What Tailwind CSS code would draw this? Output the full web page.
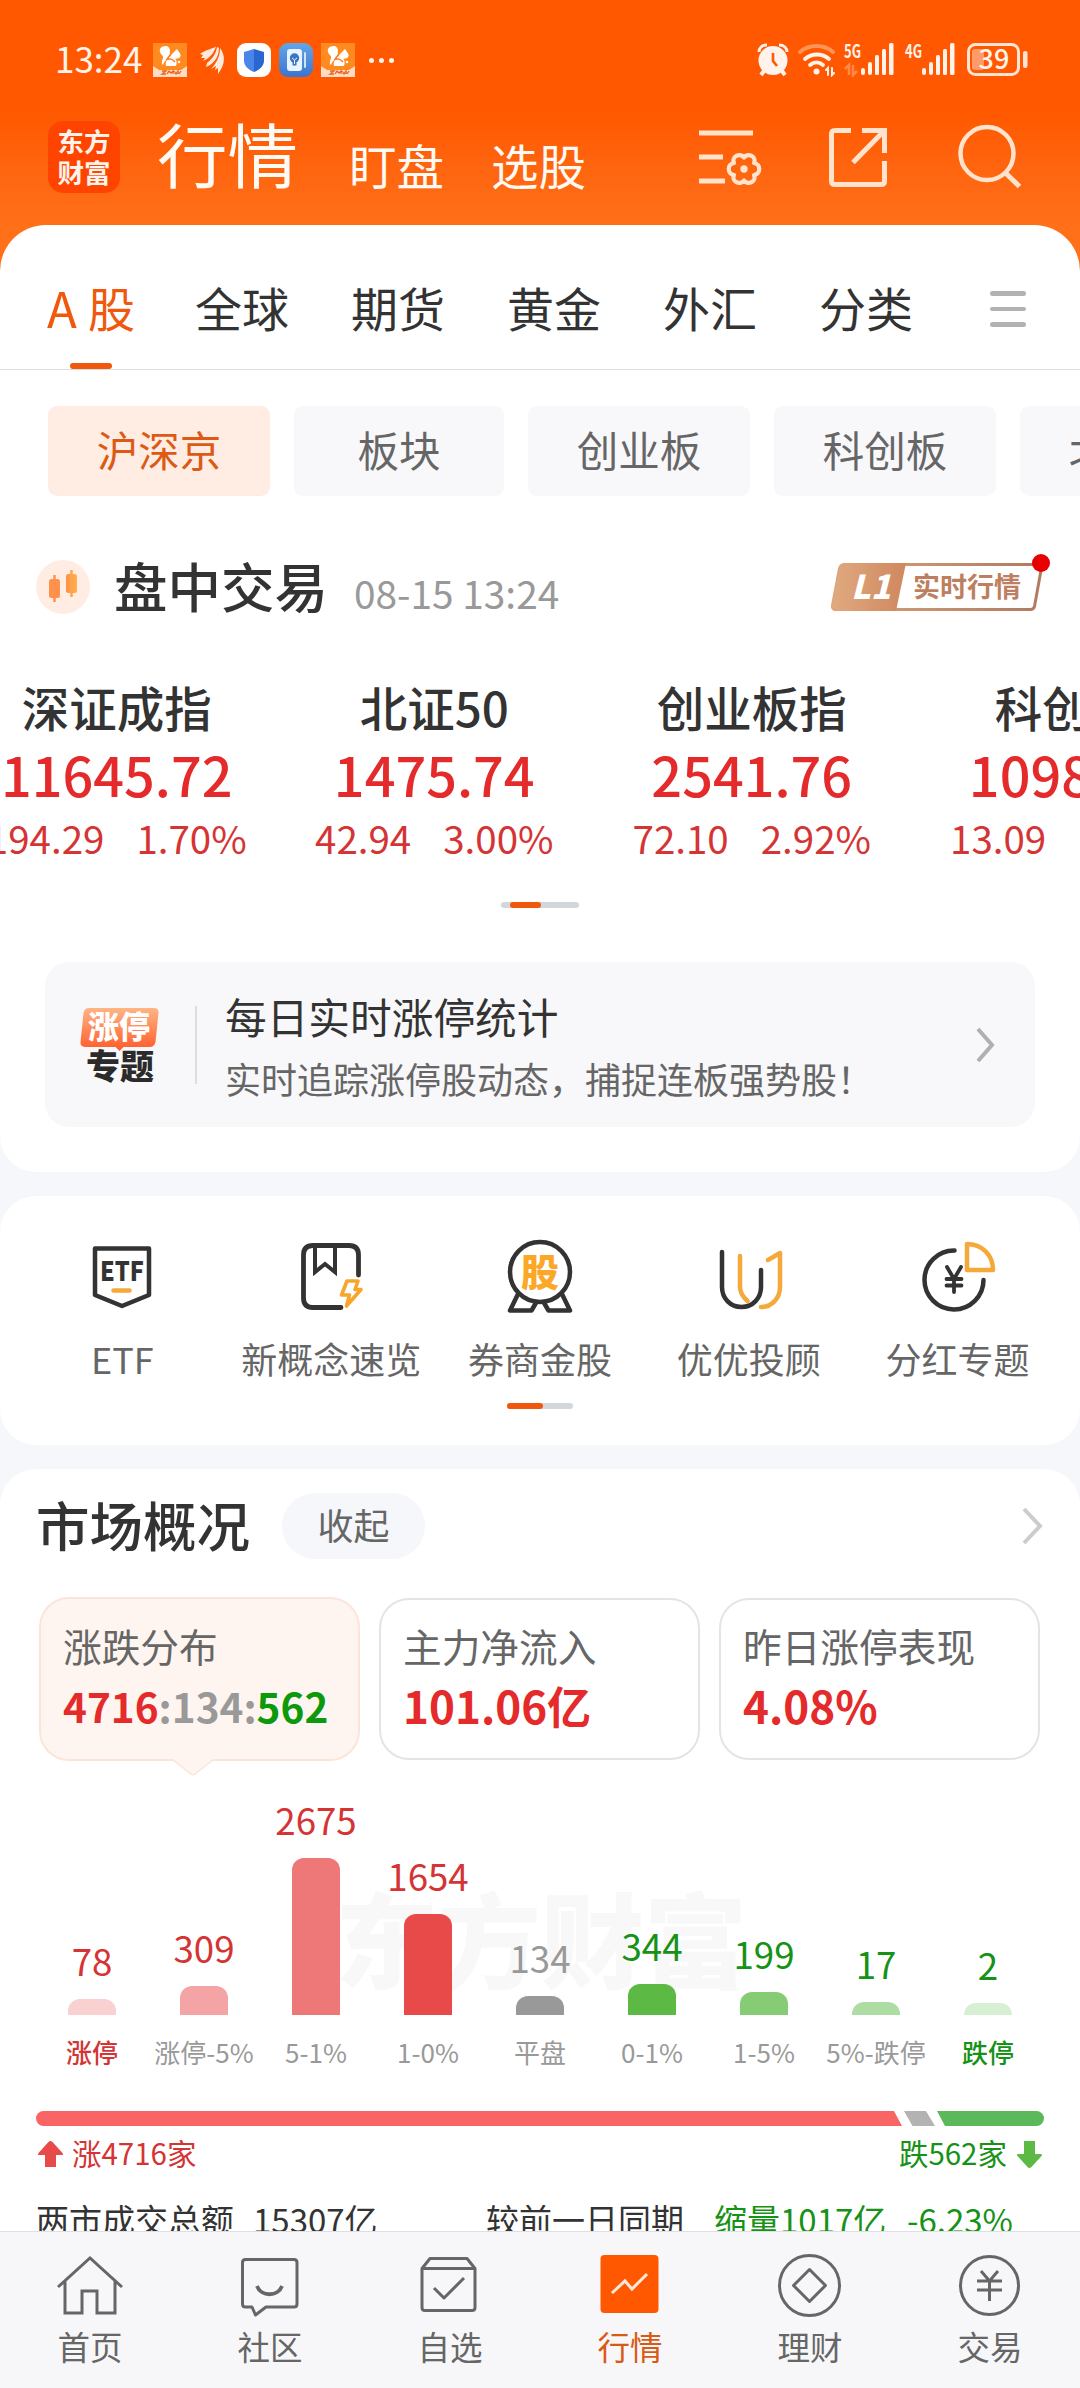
<!DOCTYPE html>
<html lang="zh-CN">
<head>
  <meta charset="UTF-8" />
  <meta name="viewport" content="width=device-width, initial-scale=1.0"/>
  <title>行情</title>
  <script src="https://cdn.jsdelivr.net/npm/@tailwindcss/browser@4"></script>
</head>
<body class="relative w-[1080px] h-[2388px] overflow-hidden bg-[#f6f7fa] text-[#333] font-['Noto_Sans_CJK_SC',sans-serif]">

  <!-- Header -->
  <header class="h-[290px] -mb-[65px] bg-linear-to-b from-[#ff5800] from-[38%] to-[#ff7019] to-[78%]">

    <!-- Status bar -->
    <div class="h-[121px] pt-[43px] pl-[55px] pr-[52px] flex items-start justify-between text-[#fff3ea]">
      <div class="flex items-center h-[34px]">
        <span class="w-[98px] text-[35px] leading-[34px] pb-1">13:24</span>
        <svg class="w-[34px] h-[34px]" viewBox="0 0 34 34">
          <rect width="34" height="34" fill="#ff8a1f"/>
          <path d="M0 23q3 2 6 4h22q3-2 6-4v11H0z" fill="#ffdcc6"/>
          <path d="M13 3c-5 0-7 3-6 6 1 3 4 4 3 6-1 3-2 5 0 7 1-4 4-5 6-8 2-4 0-4 1-6 0-3-2-5-4-5z" fill="#fff"/>
          <path d="M24 6l2 3c2 2 2 5 0 6l-4 1c2 1 2 4 1 7H13c-1-4 1-7 4-10 2-2 4-4 7-7z" fill="#fff"/>
          <path d="M13 17c3-2 7-1 9 2M18 11l-4 5" fill="none" stroke="#ff7a1a" stroke-width="1.500"/>
          <circle cx="26" cy="19" r="1.200" fill="#fff"/>
          <path d="M9 28h4l-4 3h4M14 31l2-3 2 2 2-2v3M21 28l2 3 2-3v3M26 31l2-3" fill="none" stroke="#e8641c" stroke-width="1.300"/>
        </svg>
        <svg class="w-[24px] h-[30px] ml-[13px]" viewBox="0 0 24 30" fill="#ffe9dc">
          <path d="M0 9C5 5 10 5 16 1.500 14 8 10 13 3 16l2-3-4 0 2-3z"/>
          <path d="M17 2l2 1C19 12 14 19 6 22l1-4C12 14 16 9 17 2z"/>
          <path d="M20 3c6 8 5 17-2 26l0-6-3 2 1-4-5 3C17 17 20 11 20 3z"/>
        </svg>
        <svg class="w-[34px] h-[34px] ml-[13px]" viewBox="0 0 34 34">
          <rect width="34" height="34" rx="9" fill="#fff"/>
          <path d="M17 6l10 3v9c0 5-5 9-10 11z" fill="#2a66cf"/>
          <path d="M17 6L7 9v9c0 5 5 9 10 11z" fill="#4a86ea"/>
        </svg>
        <svg class="w-[34px] h-[34px] ml-[8px]" viewBox="0 0 34 34">
          <defs><linearGradient id="bk" x1="0" y1="0" x2="0" y2="1"><stop offset="0" stop-color="#63a6ea"/><stop offset="1" stop-color="#3b74cf"/></linearGradient></defs>
          <rect width="34" height="34" rx="9" fill="url(#bk)"/>
          <rect x="8" y="6" width="15" height="22" rx="3" fill="#eaf4ff"/>
          <rect x="25" y="9" width="2" height="16" rx="1" fill="#cfe3fb"/>
          <circle cx="15.500" cy="15" r="4.700" fill="#3a74c8"/>
          <path d="M13.500 19h4v3.500h-4z" fill="#3a74c8"/>
          <path d="M13 15l2.500 2 2.500-2M15.500 17v4" stroke="#eaf4ff" fill="none"/>
        </svg>
        <svg class="w-[34px] h-[34px] ml-[8px]" viewBox="0 0 34 34">
          <rect width="34" height="34" fill="#ff8a1f"/>
          <path d="M0 23q3 2 6 4h22q3-2 6-4v11H0z" fill="#ffdcc6"/>
          <path d="M13 3c-5 0-7 3-6 6 1 3 4 4 3 6-1 3-2 5 0 7 1-4 4-5 6-8 2-4 0-4 1-6 0-3-2-5-4-5z" fill="#fff"/>
          <path d="M24 6l2 3c2 2 2 5 0 6l-4 1c2 1 2 4 1 7H13c-1-4 1-7 4-10 2-2 4-4 7-7z" fill="#fff"/>
          <path d="M13 17c3-2 7-1 9 2M18 11l-4 5" fill="none" stroke="#ff7a1a" stroke-width="1.500"/>
          <circle cx="26" cy="19" r="1.200" fill="#fff"/>
          <path d="M9 28h4l-4 3h4M14 31l2-3 2 2 2-2v3M21 28l2 3 2-3v3M26 31l2-3" fill="none" stroke="#e8641c" stroke-width="1.300"/>
        </svg>
        <div class="flex gap-[5px] ml-[14px]">
          <i class="size-[5px] rounded-full bg-[#fff3ea]"></i>
          <i class="size-[5px] rounded-full bg-[#fff3ea]"></i>
          <i class="size-[5px] rounded-full bg-[#fff3ea]"></i>
        </div>
      </div>

      <div class="flex items-start h-[34px]">
        <svg class="w-[32px] h-[34px]" viewBox="0 0 32 34">
          <circle cx="16" cy="17.500" r="14.500" fill="#fff3ec"/>
          <path d="M2 9c0-4 3-7 8-7M30 9c0-4-3-7-8-7" stroke="#fff3ec" stroke-width="3" fill="none"/>
          <path d="M7 28l-3 4M25 28l3 4" stroke="#fff3ec" stroke-width="4"/>
          <path d="M16 10v8l4 5" stroke="#ff5800" stroke-width="2.600" fill="none"/>
        </svg>
        <svg class="w-[38px] h-[34px] ml-[9px]" viewBox="0 0 38 34" fill="none" stroke-width="3.800" stroke-linecap="round">
          <path d="M2 9C11 1 26 1 35 9" stroke="#ff9457"/>
          <path d="M7 16c7-6 17-6 24 0M12 22c4-3.500 9-3.500 13 0" stroke="#fff3ec"/>
          <circle cx="18.500" cy="28.500" r="3" fill="#fff3ec" stroke="none"/>
          <path d="M28 27l2-2v7M34 25v7l2-2" stroke="#fff3ec" stroke-width="2"/>
        </svg>
        <svg class="w-[50px] h-[34px] ml-[8px] overflow-visible" viewBox="0 0 50 34" fill="#fff3ec">
          <text x="0" y="14.500" font-size="18" font-weight="700" textLength="17" lengthAdjust="spacingAndGlyphs" font-family="Noto Sans CJK SC">5G</text>
          <path d="M1 26l4-4v10M9 22v10l4-4" stroke="#ff8a48" stroke-width="2.500" fill="none"/>
          <rect x="17" y="25" width="4" height="7" rx="2"/><rect x="24" y="19" width="4" height="13" rx="2"/><rect x="31" y="12" width="4" height="20" rx="1.500"/><rect x="38" y="6" width="4" height="26" rx="1.500"/><rect x="45" y="0" width="4.500" height="32" rx="1.500"/>
        </svg>
        <svg class="w-[50px] h-[34px] ml-[11px] overflow-visible" viewBox="0 0 50 34" fill="#fff3ec">
          <text x="0" y="14.500" font-size="18" font-weight="700" textLength="17" lengthAdjust="spacingAndGlyphs" font-family="Noto Sans CJK SC">4G</text>
          <rect x="17" y="25" width="4" height="7" rx="2"/><rect x="24" y="19" width="4" height="13" rx="2"/><rect x="31" y="12" width="4" height="20" rx="1.500"/><rect x="38" y="6" width="4" height="26" rx="1.500"/><rect x="45" y="0" width="4.500" height="32" rx="1.500"/>
        </svg>
        <svg class="w-[61px] h-[34px] ml-[12px] overflow-visible" viewBox="0 0 61 34">
          <rect x="1.500" y="1.500" width="50" height="30" rx="7" fill="none" stroke="#ffe4d3" stroke-width="3"/>
          <rect x="5" y="6" width="12" height="21" rx="3" fill="#ff9a6a"/>
          <rect x="56" y="8" width="4.500" height="17" rx="2" fill="#ffe4d3"/>
          <text x="27" y="26" font-size="27" font-weight="500" text-anchor="middle" fill="#fff3ec" font-family="Noto Sans CJK SC">39</text>
        </svg>
      </div>
    </div>

    <!-- Main nav -->
    <div class="flex h-[72px] pl-[48px] text-[#fffaf3]">
      <div class="w-[72px] h-[72px] rounded-[15px] bg-[#ff4400] font-bold text-[26.500px] leading-[31px] text-center pt-[4px] text-[#fff3ec]">东方<br>财富</div>
      <div class="w-[192px] pl-[37px] text-[70.500px] leading-[72px] -mt-[5px] whitespace-nowrap">行情</div>
      <div class="w-[142px] pl-[37px] text-[47.500px] leading-[72px] mt-[8px] whitespace-nowrap">盯盘</div>
      <div class="w-[245px] pl-[37px] text-[47.500px] leading-[72px] mt-[8px] whitespace-nowrap">选股</div>
      <svg class="w-[64px] h-[72px] shrink-0" viewBox="699 121 64 72" fill="none" stroke="#ffe3cc" stroke-width="5">
        <path d="M699 133h54M699 157h24M699 181h26"/>
        <path stroke-width="4.200" stroke-linejoin="round" d="M744 157.500C748 152 757 157 754 163C761 164 761 174 754 175C757 181 748 186 744 180.500C740 186 731 181 734 175C727 174 727 164 734 163C731 157 740 152 744 157.500z"/>
        <circle cx="744" cy="169" r="3.700" fill="#ffe3cc" stroke="none"/>
      </svg>
      <svg class="w-[60px] h-[72px] ml-[65px] shrink-0" viewBox="828 121 60 72" fill="none" stroke="#ffe3cc" stroke-width="5">
        <path d="M851 130.500H835q-3.500 0-3.500 3.500v47q0 3.500 3.500 3.500h46q3.500 0 3.500-3.500v-20M862 130.500h22.500V153M884 131l-31 31.500"/>
      </svg>
      <svg class="w-[66px] h-[72px] ml-[69px] shrink-0" viewBox="957 121 66 72" fill="none" stroke="#ffe3cc" stroke-width="4.500">
        <circle cx="987" cy="153.500" r="26.500"/>
        <path d="M1005.500 173l14 13.500" stroke-width="5"/>
      </svg>
    </div>
  </header>

  <!-- A-share quotes -->
  <section class="bg-white rounded-t-[46px] rounded-b-[36px] pb-[45px] overflow-hidden">

    <!-- Tabs -->
    <div class="relative h-[145px] pt-[19px] pl-[47px] flex items-center border-b border-[#dedede] text-[47px] leading-[60px] whitespace-nowrap">
      <div class="w-[148px] text-[#f0590d] flex"><span class="w-[41px] text-[49px]">A</span>股</div>
      <div class="w-[156px]">全球</div>
      <div class="w-[156px]">期货</div>
      <div class="w-[156px]">黄金</div>
      <div class="w-[156px]">外汇</div>
      <div class="w-[171px]">分类</div>
      <div class="flex flex-col gap-[11px] mt-[5px]">
        <i class="w-[36px] h-[4.500px] rounded-full bg-[#b2b2b2]"></i>
        <i class="w-[36px] h-[4.500px] rounded-full bg-[#b2b2b2]"></i>
        <i class="w-[36px] h-[4.500px] rounded-full bg-[#b2b2b2]"></i>
      </div>
      <i class="absolute left-[70px] bottom-0 w-[42px] h-[6px] rounded-full bg-[#f0590d]"></i>
    </div>

    <!-- Chips -->
    <div class="mt-[36px] ml-[48px] flex gap-[24px] text-[41.500px] leading-[86px] text-center text-[#666] whitespace-nowrap">
      <div class="w-[222px] h-[90px] shrink-0 rounded-[9px] bg-[#ffede4] text-[#dc5a14]">沪深京</div>
      <div class="w-[210px] h-[90px] shrink-0 rounded-[9px] bg-[#f8f8fa]">板块</div>
      <div class="w-[222px] h-[90px] shrink-0 rounded-[9px] bg-[#f8f8fa]">创业板</div>
      <div class="w-[222px] h-[90px] shrink-0 rounded-[9px] bg-[#f8f8fa]">科创板</div>
      <div class="w-[222px] h-[90px] shrink-0 rounded-[9px] bg-[#f8f8fa]">北交所</div>
    </div>

    <!-- Session title -->
    <div class="mt-[64px] pl-[36px] pr-[28px] h-[54px] flex items-center">
      <svg class="w-[54px] h-[54px]" viewBox="0 0 54 54">
        <defs><linearGradient id="cd" x1="0" y1="0" x2="1" y2="0"><stop offset="0" stop-color="#ff9147"/><stop offset="1" stop-color="#ffb04d"/></linearGradient></defs>
        <circle cx="27" cy="27" r="27" fill="#ffede4"/>
        <rect x="13" y="19" width="11" height="19" rx="2.500" fill="#ff914d"/><path d="M18.500 15v27" stroke="#ff914d" stroke-width="2.500"/>
        <rect x="30" y="14" width="11" height="19" rx="2.500" fill="url(#cd)"/><path d="M35.500 10v27" stroke="#ffa34d" stroke-width="2.500"/>
      </svg>
      <h2 class="ml-[24px] text-[53.500px] leading-[54px] font-medium pb-[5px]">盘中交易</h2>
      <span class="ml-[26px] text-[38.800px] leading-[54px] text-[#999] pt-[10px]">08-15 13:24</span>
      <svg class="w-[222px] h-[62px] ml-auto -mt-[8px] overflow-visible" viewBox="830 552 222 62">
        <defs>
          <linearGradient id="l1" x1="0" y1="0" x2="1" y2="0"><stop offset="0" stop-color="#e0aa80"/><stop offset="1" stop-color="#d0875e"/></linearGradient>
          <linearGradient id="l2" x1="0" y1="0" x2="1" y2="0"><stop offset="0" stop-color="#dba37a"/><stop offset="1" stop-color="#b07a63"/></linearGradient>
        </defs>
        <path d="M845 564.500h194q3 0 2.500 3l-7 39q-1 3-4 3H836q-4 0-3.500-4l7-37q1-4 5.500-4z" fill="#fff" stroke="url(#l2)" stroke-width="3"/>
        <path d="M845 563h61l-10 48h-60q-5 0-4-5l7-37q1-6 6-6z" fill="url(#l1)"/>
        <text x="851" y="599" font-size="33" font-weight="900" font-style="italic" fill="#fff" font-family="Noto Sans CJK SC">L1</text>
        <text x="913" y="597" font-size="27" font-weight="700" fill="#bd7f5f" font-family="Noto Sans CJK SC">实时行情</text>
        <circle cx="1041" cy="563" r="9" fill="#e60000"/>
      </svg>
    </div>

    <!-- Indices -->
    <div class="mt-[67px] -ml-[42px] flex text-center whitespace-nowrap">
      <div class="w-[317.500px] shrink-0">
        <div class="text-[47.500px] leading-[52px] font-medium">深证成指</div>
        <div class="mt-[11px] text-[54px] leading-[60px] font-medium text-[#e42a2a]">11645.72</div>
        <div class="mt-[10px] text-[38.500px] leading-[46px] text-[#d53434] flex justify-center gap-[32px]"><span>194.29</span><span>1.70%</span></div>
      </div>
      <div class="w-[317.500px] shrink-0">
        <div class="text-[47.500px] leading-[52px] font-medium">北证50</div>
        <div class="mt-[11px] text-[54px] leading-[60px] font-medium text-[#e42a2a]">1475.74</div>
        <div class="mt-[10px] text-[38.500px] leading-[46px] text-[#d53434] flex justify-center gap-[32px]"><span>42.94</span><span>3.00%</span></div>
      </div>
      <div class="w-[317.500px] shrink-0">
        <div class="text-[47.500px] leading-[52px] font-medium">创业板指</div>
        <div class="mt-[11px] text-[54px] leading-[60px] font-medium text-[#e42a2a]">2541.76</div>
        <div class="mt-[10px] text-[38.500px] leading-[46px] text-[#d53434] flex justify-center gap-[32px]"><span>72.10</span><span>2.92%</span></div>
      </div>
      <div class="w-[317.500px] shrink-0">
        <div class="text-[47.500px] leading-[52px] font-medium">科创50</div>
        <div class="mt-[11px] text-[54px] leading-[60px] font-medium text-[#e42a2a]">1098.50</div>
        <div class="mt-[10px] text-[38.500px] leading-[46px] text-[#d53434] flex justify-center gap-[32px]"><span>13.09</span><span>1.21%</span></div>
      </div>
    </div>
    <div class="mt-[42px] mx-auto w-[78px] h-[6px] pl-[9px] rounded-full bg-[#d3d7db]">
      <div class="w-[31px] h-[6px] rounded-full bg-[#f0590d]"></div>
    </div>

    <!-- Banner -->
    <div class="mt-[54px] mx-[45px] h-[165px] rounded-[24px] bg-[#f8f8fa] flex items-center">
      <svg class="w-[82px] h-[78px] ml-[34px] overflow-visible" viewBox="79 1006 82 78">
        <defs><linearGradient id="zt" x1="0" y1="0" x2="0" y2="1"><stop offset="0" stop-color="#ffb584"/><stop offset="1" stop-color="#ff5a2a"/></linearGradient></defs>
        <path d="M89 1008h65q5 0 4.500 5l-3 29q-1 5-6 5h-26l-4 4-4-4H85q-5 0-4.500-5l3-29q1-5 5.500-5z" fill="url(#zt)"/>
        <g font-family="Noto Sans CJK SC" font-weight="900" text-anchor="middle">
          <text x="119" y="1038" font-size="31" fill="#fff">涨停</text>
          <text x="120" y="1079" font-size="34" fill="#2b2b2b">专题</text>
        </g>
      </svg>
      <i class="w-[2px] h-[78px] ml-[34px] bg-[#dcdde0]"></i>
      <div class="ml-[28px] mt-[4px] whitespace-nowrap">
        <div class="text-[41.700px] leading-[62px]">每日实时涨停统计</div>
        <div class="text-[36px] leading-[62px] text-[#666]">实时追踪涨停股动态，捕捉连板强势股！</div>
      </div>
      <svg class="w-[22px] h-[36px] ml-auto mr-[38px]" viewBox="0 0 22 36" fill="none" stroke="#b0b0b0" stroke-width="4"><path d="M3 2l14 16L3 34"/></svg>
    </div>
  </section>

  <!-- Shortcuts -->
  <section class="mt-[24px] h-[249px] bg-white rounded-[36px] pt-[40px] px-[18px]">
    <div class="grid grid-cols-5 justify-items-center text-[36px] leading-[40px] text-[#666] whitespace-nowrap">
      <div class="flex flex-col items-center gap-[22px]">
        <svg class="w-[80px] h-[80px]" viewBox="0 0 80 80" fill="none" stroke="#333" stroke-width="4.500" stroke-linejoin="round" stroke-linecap="round">
          <path d="M13 12.500h54V59L40 70 13 59z"/>
          <path d="M31.500 54.500h16" stroke="#f4a93a"/>
          <text x="40" y="44.500" font-size="26" font-weight="900" text-anchor="middle" textLength="44" lengthAdjust="spacingAndGlyphs" fill="#333" stroke="none" font-family="Noto Sans CJK SC">ETF</text>
        </svg>
        <span>ETF</span>
      </div>
      <div class="flex flex-col items-center gap-[22px]">
        <svg class="w-[80px] h-[80px]" viewBox="0 0 80 80" fill="none" stroke="#333" stroke-width="4.800" stroke-linecap="round">
          <path d="M50 71.500H22q-9.500 0-9.500-9.500V19q0-9.500 9.500-9.500h36q9.500 0 9.500 9.500v20"/>
          <path d="M24 11v25l10-8 10 8V11" stroke-width="4" stroke-linecap="butt"/>
          <path d="M56 45h11l-3 8.500h6L55.500 70l3-11h-8z" stroke="#f7a62b" stroke-width="3.600" stroke-linejoin="round"/>
        </svg>
        <span>新概念速览</span>
      </div>
      <div class="flex flex-col items-center gap-[22px]">
        <svg class="w-[80px] h-[80px]" viewBox="0 0 80 80" fill="none" stroke="#333" stroke-width="4.500" stroke-linejoin="round">
          <circle cx="40" cy="36" r="30"/>
          <path d="M18 58l-8 16.500h21.500l5-8.500M62 58l8 16.500H48.500l-5-8.500"/>
          <text x="40" y="50" font-size="38" font-weight="900" text-anchor="middle" fill="#fba728" stroke="none" font-family="Noto Sans CJK SC">股</text>
        </svg>
        <span>券商金股</span>
      </div>
      <div class="flex flex-col items-center gap-[22px]">
        <svg class="w-[80px] h-[80px]" viewBox="0 0 80 80" fill="none" stroke="#333" stroke-width="4.500" stroke-linecap="round" stroke-linejoin="round">
          <path d="M31 20v31c0 6 3 10 7.500 14M59 24l12-7v34c0 11-8 20-19 20" stroke="#f4a93a"/>
          <path d="M13 16v35c0 11 8 20 19.500 20S52 62 52 51V34"/>
        </svg>
        <span>优优投顾</span>
      </div>
      <div class="flex flex-col items-center gap-[22px]">
        <svg class="w-[80px] h-[80px]" viewBox="0 0 80 80" fill="none" stroke="#333" stroke-width="4.500" stroke-linecap="round" stroke-linejoin="round">
          <path d="M36.500 14.500A29.500 29.500 0 1 0 65.500 44"/>
          <path d="M49 8v26h26C75 19 64 8 49 8z" stroke="#f4a93a"/>
          <path d="M29 31l7 12 7-12M36 43v13M28.500 43h15M28.500 49.500h15" stroke-width="3.800"/>
        </svg>
        <span>分红专题</span>
      </div>
    </div>
    <div class="mt-[25px] mx-auto w-[66px] h-[6px] rounded-full bg-[#d3d7db]">
      <div class="w-[36px] h-[6px] rounded-full bg-[#f0590d]"></div>
    </div>
  </section>

  <!-- Market overview -->
  <section class="mt-[24px] h-[762px] bg-white rounded-t-[36px] pt-[24px] overflow-hidden">
    <div class="flex items-center h-[66px] pl-[36px] pr-[35px]">
      <h2 class="text-[53.500px] leading-[66px] font-medium pb-[5px]">市场概况</h2>
      <div class="ml-[32px] w-[143px] h-[66px] rounded-full bg-[#f6f7fa] text-center text-[36px] leading-[63px] text-[#666]">收起</div>
      <svg class="w-[24px] h-[38px] ml-auto" viewBox="0 0 24 38" fill="none" stroke="#ccc" stroke-width="4"><path d="M3 2l16 17L3 36"/></svg>
    </div>

    <!-- Stat cards -->
    <div class="mt-[38px] mx-[39px] flex gap-[19px] text-[38.700px] leading-[50px] text-[#666] whitespace-nowrap">
      <div class="relative w-[321px] h-[164px] pl-[22px] pt-[21px] rounded-[30px] border-2 border-[#fbe5da] bg-[#fff5f0]">
        <div>涨跌分布</div>
        <div class="mt-[11px] text-[40.500px] font-bold text-[#999]"><span class="text-[#e42a2a]">4716</span>:134:<span class="text-[#0c9a0c]">562</span></div>
        <svg class="absolute left-[131px] top-[159px] w-[42px] h-[18px]" viewBox="0 0 42 18"><path d="M1 1h40L23 16q-2 1.500-4 0z" fill="#fff5f0"/><path d="M1 2l18 14q2 1.500 4 0L41 2" fill="none" stroke="#fbe5da" stroke-width="1.500"/></svg>
      </div>
      <div class="w-[321px] h-[162px] mt-px pl-[22px] pt-[20px] rounded-[30px] border-2 border-[#e4e4e6]">
        <div>主力净流入</div>
        <div class="mt-[10px] text-[44px] font-bold text-[#e42a2a]">101.06亿</div>
      </div>
      <div class="w-[321px] h-[162px] mt-px pl-[22px] pt-[20px] rounded-[30px] border-2 border-[#e4e4e6]">
        <div>昨日涨停表现</div>
        <div class="mt-[10px] text-[44px] font-bold text-[#e42a2a]">4.08%</div>
      </div>
    </div>

    <!-- Distribution chart -->
    <div class="relative h-[254px] px-[36px]">
      <div class="absolute left-[335px] top-[116px] text-[103px] leading-[120px] font-black text-[#f8f8f8] whitespace-nowrap">东方财富</div>
      <div class="relative h-full grid grid-cols-9 items-end text-center text-[36.700px] leading-[44px] text-[#d53434]">
        <div>78<div class="mt-[17px] mx-auto w-[48px] h-[16px] rounded-t-[12px] bg-[#fad1d1]"></div></div>
        <div>309<div class="mt-[17px] mx-auto w-[48px] h-[29px] rounded-t-[12px] bg-[#f5a4a6]"></div></div>
        <div>2675<div class="mt-[17px] mx-auto w-[48px] h-[157px] rounded-t-[12px] bg-[#ee7777]"></div></div>
        <div>1654<div class="mt-[17px] mx-auto w-[48px] h-[101px] rounded-t-[12px] bg-[#e84a4a]"></div></div>
        <div class="text-[#999]">134<div class="mt-[17px] mx-auto w-[48px] h-[19px] rounded-t-[12px] bg-[#999]"></div></div>
        <div class="text-[#169216]">344<div class="mt-[17px] mx-auto w-[48px] h-[31px] rounded-t-[12px] bg-[#5cb944]"></div></div>
        <div class="text-[#169216]">199<div class="mt-[17px] mx-auto w-[48px] h-[23px] rounded-t-[12px] bg-[#85cc75]"></div></div>
        <div class="text-[#169216]">17<div class="mt-[17px] mx-auto w-[48px] h-[13px] rounded-t-[12px] bg-[#aedda3]"></div></div>
        <div class="text-[#169216]">2<div class="mt-[17px] mx-auto w-[48px] h-[12px] rounded-t-[12px] bg-[#d7efd3]"></div></div>
      </div>
    </div>
    <div class="mt-[22px] px-[36px] grid grid-cols-9 text-[26px] leading-[30px] text-[#999] whitespace-nowrap">
      <div class="flex justify-center text-[#d53434] font-medium">涨停</div>
      <div class="flex justify-center">涨停-5%</div>
      <div class="flex justify-center">5-1%</div>
      <div class="flex justify-center">1-0%</div>
      <div class="flex justify-center">平盘</div>
      <div class="flex justify-center">0-1%</div>
      <div class="flex justify-center">1-5%</div>
      <div class="flex justify-center">5%-跌停</div>
      <div class="flex justify-center text-[#169216] font-medium">跌停</div>
    </div>

    <!-- Up / down ratio -->
    <svg class="block mt-[44px] ml-[36px] w-[1008px] h-[15px]" viewBox="36 0 1008 15">
      <path d="M43.500 0H894l8 15H43.500a7.500 7.500 0 0 1 0-15z" fill="#f96464"/>
      <path d="M904 0h22l9 15h-22.500z" fill="#b3b3b3"/>
      <path d="M937 0h99.500a7.500 7.500 0 0 1 0 15H945z" fill="#5bb95b"/>
    </svg>
    <div class="mt-[8px] px-[37px] flex items-center text-[29.500px] leading-[36px]">
      <svg class="w-[27px] h-[27px] mt-[4px]" viewBox="0 0 27 27" fill="#e84a4a"><path d="M13.500 0q1 0 2 1l10 11q1.500 2-1 2H19v12H8V14H2.500q-2.500 0-1-2l10-11q1-1 2-1z"/></svg>
      <span class="ml-[8px] text-[#d53434]">涨4716家</span>
      <span class="ml-auto text-[#169216]">跌562家</span>
      <svg class="w-[27px] h-[27px] ml-[9px] mt-[4px]" viewBox="0 0 27 27" fill="#5cb944"><path d="M13.500 27q1 0 2-1l10-11q1.500-2-1-2H19V0H8v13H2.500q-2.500 0-1 2l10 11q1 1 2 1z"/></svg>
    </div>

    <!-- Turnover -->
    <div class="mt-[29px] pl-[36px] flex text-[33px] leading-[40px] whitespace-nowrap">
      <span class="w-[217px]">两市成交总额</span>
      <span class="w-[233px]">15307亿</span>
      <span class="w-[228px]">较前一日同期</span>
      <span class="w-[193px] text-[#169216]">缩量1017亿</span>
      <span class="text-[#169216]">-6.23%</span>
    </div>
  </section>

  <!-- Bottom tab bar -->
  <nav class="relative h-[157px] pt-[18px] bg-[#f7f7fa] border-t border-[#dfdfe2] grid grid-cols-6 text-center text-[32.500px] leading-[40px] text-[#666]">
    <div>
      <svg class="mx-auto w-[72px] h-[72px]" viewBox="0 0 72 72" fill="none" stroke="#666" stroke-width="3"><path d="M4 37L36 8l32 29M11 31v32h17V41h15v22h18V31"/></svg>
      <div class="mt-[4px]">首页</div>
    </div>
    <div>
      <svg class="mx-auto w-[72px] h-[72px]" viewBox="0 0 72 72" fill="none" stroke="#666" stroke-width="3" stroke-linejoin="round"><path d="M11.500 9.500H60q3 0 3 3V54q0 3-3 3H32l-10.500 8L18 57h-6.500q-3 0-3-3V12.500q0-3 3-3z"/><path d="M23 36c4 11 21 11 25 0" stroke-width="3.800"/></svg>
      <div class="mt-[4px]">社区</div>
    </div>
    <div>
      <svg class="mx-auto w-[72px] h-[72px]" viewBox="0 0 72 72" fill="none" stroke="#666" stroke-width="3" stroke-linejoin="round"><path d="M8 18.500L16 8.500h37l8 10v39q0 3-3 3H11q-3 0-3-3zM8 18.500h53M20 38l10 10 20-20"/></svg>
      <div class="mt-[4px]">自选</div>
    </div>
    <div class="text-[#d95a14]">
      <svg class="mx-auto w-[72px] h-[72px]" viewBox="0 0 72 72"><rect x="6.500" y="5" width="58" height="58" rx="4" fill="#ff5800"/><path d="M18 43l13-12 7 8 15-15" fill="none" stroke="#ffe9dc" stroke-width="3"/></svg>
      <div class="mt-[4px]">行情</div>
    </div>
    <div>
      <svg class="mx-auto w-[72px] h-[72px]" viewBox="0 0 72 72" fill="none" stroke="#666" stroke-width="3"><circle cx="35.500" cy="35.500" r="30"/><path d="M35.500 19.500l16 16-16 16-16-16z" stroke-linejoin="round"/></svg>
      <div class="mt-[4px]">理财</div>
    </div>
    <div>
      <svg class="mx-auto w-[72px] h-[72px]" viewBox="0 0 72 72" fill="none" stroke="#666" stroke-width="3"><circle cx="35.500" cy="35.500" r="29"/><path d="M27 21l8.500 10L44 21M35.500 31v20M23 31h25M23 40h25"/></svg>
      <div class="mt-[4px]">交易</div>
    </div>
  </nav>
</body>
</html>
